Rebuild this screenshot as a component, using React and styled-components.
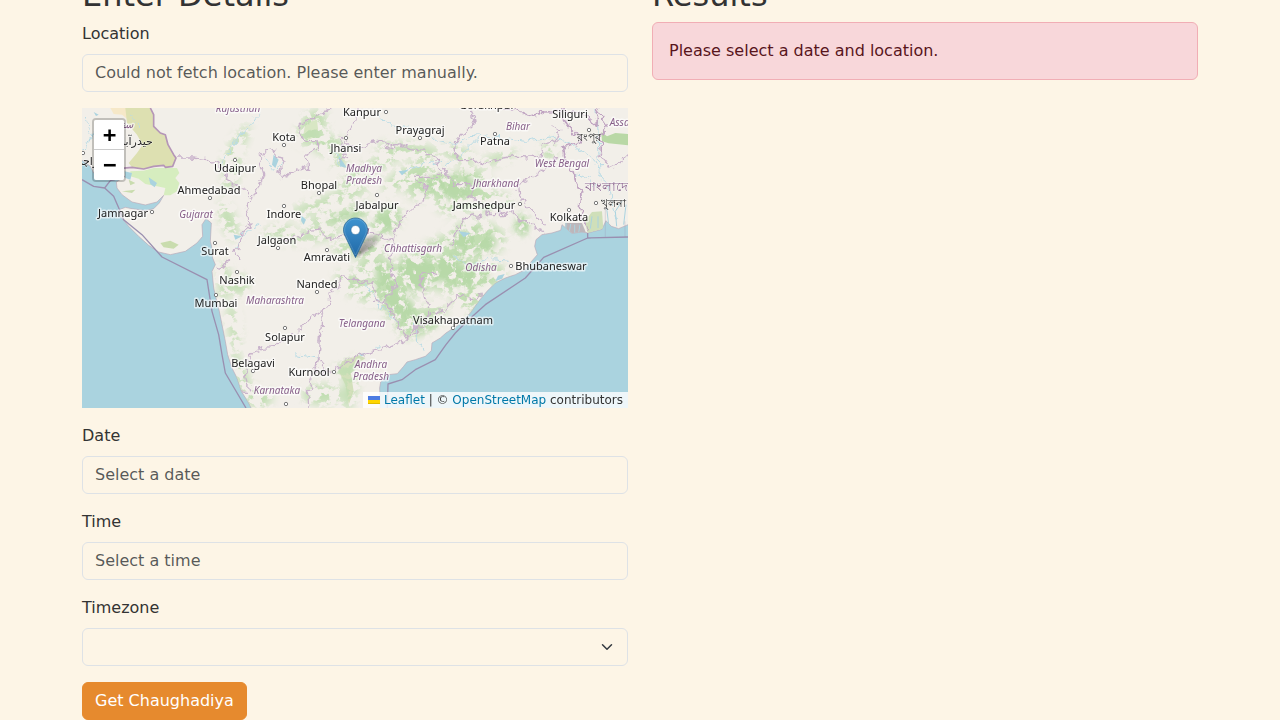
import React from "react";
import styled, { createGlobalStyle, css } from "styled-components";

const GlobalStyle = createGlobalStyle`
  *, *::before, *::after { box-sizing: border-box; }
  body {
    margin: 0;
    background: #fdf5e6;
    color: #333;
    font: 16px/24px "DejaVu Sans", sans-serif;
  }
`;

const Container = styled.main`
  display: grid;
  grid-template-columns: repeat(2, minmax(0, 1fr));
  gap: 24px;
  max-width: 1140px;
  margin: -24px auto 0;
  padding: 0 12px;
`;

const Column = styled.section``;

const Title = styled.h2`
  margin: 0 0 8px;
  font-size: 32px;
  line-height: 38px;
  font-weight: 500;
`;

const Field = styled.div`
  margin-bottom: 16px;
`;

const Label = styled.label`
  display: block;
  margin-bottom: 8px;
`;

const control = css`
  display: block;
  width: 100%;
  height: 38px;
  padding: 5px 12px 7px;
  border: 1px solid #dee2e6;
  border-radius: 6px;
  background: transparent;
  color: #212529;
  font: inherit;
`;

const Input = styled.input`
  ${control}
  &::placeholder { color: rgba(33, 37, 41, 0.75); opacity: 1; }
`;

const SelectWrap = styled.div`
  display: grid;
  align-items: center;
  & > * { grid-area: 1 / 1; }
`;

const Select = styled.select`
  ${control}
  appearance: none;
`;

const Chevron = styled.svg`
  justify-self: end;
  width: 16px;
  height: 12px;
  margin-right: 13px;
  pointer-events: none;
`;

const Button = styled.button`
  display: block;
  padding: 6px 12px;
  border: 1px solid #e68a2e;
  border-radius: 6px;
  background: #e68a2e;
  color: #fff;
  font: inherit;
`;

const Alert = styled.div`
  padding: 16px;
  border: 1px solid #f1aeb5;
  border-radius: 6px;
  background: #f8d7da;
  color: #58151c;
`;

const Map = styled.div`
  position: relative;
  height: 300px;
  margin-bottom: 16px;
  overflow: hidden;
  background: #aad3df;
`;

const MapDrawing = styled.svg`
  display: block;
  width: 100%;
  height: 100%;
`;

const ZoomControl = styled.div`
  position: absolute;
  top: 10px;
  left: 10px;
  border: 2px solid rgba(0, 0, 0, 0.2);
  border-radius: 4px;
  background-clip: padding-box;
`;

const ZoomButton = styled.button`
  display: block;
  width: 30px;
  height: 30px;
  padding: 0;
  border: 0;
  border-bottom: ${(p) => (p.$first ? "1px solid #ccc" : "0")};
  border-radius: ${(p) => (p.$first ? "2px 2px 0 0" : "0 0 2px 2px")};
  background: #fff;
  color: #000;
  font: bold 22px/30px "DejaVu Sans Mono", monospace;
  text-indent: 1px;
`;

const Marker = styled.svg`
  position: absolute;
  left: 50%;
  top: 50%;
  width: 41px;
  height: 41px;
  margin: -41px 0 0 -12px;
`;

const Attribution = styled.div`
  position: absolute;
  right: 0;
  bottom: 0;
  padding: 0 5px;
  background: rgba(255, 255, 255, 0.8);
  color: #333;
  font-size: 12px;
  line-height: 16px;
  white-space: nowrap;
`;

const MapLink = styled.a`
  color: #0078a8;
  text-decoration: none;
`;

const Flag = styled.svg`
  width: 12px;
  height: 8px;
  margin-right: 4px;
`;

const City = styled.text`
  font: 11px "Noto Sans", "DejaVu Sans", sans-serif;
  fill: #222;
  stroke: #fff;
  stroke-opacity: 0.6;
  stroke-width: ${(p) => (p.$native ? 1 : 3)}px;
  stroke-linejoin: round;
  paint-order: stroke;
  text-anchor: middle;
`;

const Region = styled(City)`
  font-size: ${(p) => (p.$native ? 13 : 10)}px;
  font-style: ${(p) => (p.$native ? "normal" : "italic")};
  fill: #87608a;
`;

const cities = [
  ["Kanpur", 280, 8], ["Kota", 202, 33], ["Prayagraj", 338, 26], ["Jhansi", 264, 44],
  ["Udaipur", 153, 64], ["Bhopal", 237, 81], ["Ahmedabad", 127, 86], ["Jabalpur", 295, 101],
  ["Indore", 202, 110], ["Jamnagar", 41, 109], ["Jalgaon", 195, 136], ["Amravati", 245, 153],
  ["Surat", 133, 147], ["Nashik", 155, 176], ["Nanded", 235, 180], ["Mumbai", 134, 199],
  ["Solapur", 203, 233], ["Belagavi", 171, 259], ["Kurnool", 227, 268], ["Visakhapatnam", 371, 216],
  ["Bhubaneswar", 469, 162], ["Kolkata", 487, 113], ["Jamshedpur", 402, 101], ["Patna", 413, 37],
  ["Siliguri", 488, 10], ["Gorakhpur", 405, 1],
];

const nativeCities = [
  ["রংপুর", 507, 33], ["খুলনা", 531, 99], ["حيدرآباد", 53, 37], ["کراچی", 7, 57],
];

const regions = [
  ["Rajasthan", 156, 4], ["Gujarat", 114, 110], ["Madhya", 282, 64], ["Pradesh", 282, 76],
  ["India", 276, 126], ["Chhattisgarh", 331, 144], ["Odisha", 399, 163], ["Maharashtra", 193, 196],
  ["Telangana", 280, 219], ["Andhra", 289, 260], ["Pradesh", 289, 272], ["Karnataka", 195, 286],
  ["Bihar", 436, 22], ["Jharkhand", 414, 79], ["West Bengal", 480, 59], ["Assam", 542, 18],
  ["سنڌ", 43, 20],
];

const dots = [
  [304, 4], [202, 37], [338, 30], [264, 30], [153, 52], [237, 85], [128, 90], [295, 87],
  [202, 98], [70, 104], [196, 140], [245, 142], [133, 135], [155, 164], [235, 184], [134, 187],
  [203, 220], [171, 263], [252, 264], [371, 220], [429, 158], [487, 102], [438, 96], [413, 26],
  [507, 22], [514, 95], [1, 45], [204, 296],
];

const LAND =
  "M-9 -9H1650V345L1610 362 1588 355 1572 338 1560 364 1517 375 1500 372 1470 376 1440 350 1436 367 1410 375 1380 380 1362 395 1358 415 1366 440 1340 470 1330 485 1300 500 1270 510 1240 525 1215 550 1190 580 1165 615 1130 650 1092 675 1075 690 1050 705 1048 728 1030 745 1000 755 975 762 965 775 946 797 920 800 896 822 893 840 895 910H512L500 885 478 850 465 810 450 780 437 740 430 700 420 650 412 610 402 570 395 540 390 490 400 470 392 450 390 420 385 400 388 345 372 332 360 350 362 385 345 405 310 430 265 440 230 432 200 412 170 385 140 355 115 325 112 305 130 298 150 302 190 308 215 302 232 285 245 262 225 282 190 291 150 282 120 260 105 240 103 222 130 205 100 205 80 215 35 195 25 175 -9 150Z";

const BORDERS = [
  "M282 150 330 150 375 155 400 165 425 185 440 215 460 235 490 250 508 275 490 310 495 335 510 350 480 375 470 400 460 440 475 450",
  "M546 130 575 125 580 145 608 150 600 170 590 200 600 212 650 180 680 185 675 140 710 120 708 98 670 98 650 75 655 50 700 25 750 0",
  "M546 130 530 150 545 200 530 240 508 275",
  "M828 0 825 30 806 60 790 85 775 95 780 105 790 140 775 150 795 155M790 100 826 125 870 105 906 95 920 120 946 112 986 125 1026 130 1066 160 1081 205 1001 205 1010 225 1036 240 1026 280 976 310 946 350 931 400",
  "M586 395 636 390 686 370 721 365 726 390 776 385 866 375 901 380 931 400 926 450",
  "M926 450 931 500 946 530 911 570 911 590 956 650 950 660 981 690 1040 640 1040 600 1030 570 1020 530 1016 490 1070 500",
  "M776 505 806 510 846 525 871 525 881 580 911 590M776 505 771 535 741 555 746 580 721 610 716 680 711 750 686 820 696 840 676 850 681 900",
  "M721 605 686 630 646 675 610 690 580 715 546 718 500 740 490 800 500 850",
  "M706 750 731 765 721 800 751 785 776 775 836 740 886 725 926 715 981 690",
  "M981 680 1010 650 1050 620 1092 600 1130 560 1170 575 1210 555",
  "M1162 0 1182 40 1122 95 1117 130 1132 155 1167 155 1202 170 1262 150 1307 145 1377 150 1382 110 1422 100 1437 70 1412 50",
  "M1081 180 1120 230 1167 230 1167 270 1202 285 1222 320 1262 320 1292 310 1322 340 1392 372M1110 410 1120 370 1150 330 1202 320",
  "M1422 150 1412 170 1352 210 1307 230 1310 260 1332 290 1392 350",
  "M1558 140 1582 180 1612 170 1638 140M404 475 425 480 440 455M470 850 495 855",
];

const HEAVY = [
  "M205 0 215 20 215 55 235 75 250 80 258 110 275 140 282 150 272 175 250 178 245 172 215 175 185 183 150 178 110 182",
];

const BANGLADESH = [
  "M1242 0 1300 5 1340 25 1390 12 1437 10 1445 35 1472 70 1492 90 1500 105 1442 120 1447 155 1477 190 1482 230 1497 260 1492 300 1507 340 1517 375",
  "M1440 0 1450 10 1500 15 1545 50 1550 0 1562 30 1572 60 1557 80 1558 140",
];

// Forested areas: cx, cy, rx, ry, rotation
const WOODS = [
  [1000, 500, 62, 60, 0], [930, 560, 44, 100, -20], [975, 630, 35, 55, 0], [1100, 490, 70, 60, -30],
  [1020, 640, 80, 35, -30], [1160, 560, 50, 50, -20], [1210, 500, 60, 45, 0], [1180, 395, 90, 55, 0],
  [1320, 350, 22, 32, 0], [1140, 250, 90, 60, -30], [1200, 280, 90, 30, 0], [1040, 230, 70, 40, -20],
  [980, 200, 90, 25, -30], [880, 170, 100, 18, -25], [830, 210, 70, 18, -25], [740, 280, 130, 18, -18],
  [770, 325, 110, 20, -15], [910, 340, 55, 38, -40], [690, 385, 100, 16, -8], [840, 420, 90, 24, 0],
  [880, 480, 60, 34, 0], [690, 60, 38, 60, 30], [730, 110, 40, 30, 0], [830, 540, 80, 30, 30],
  [980, 125, 100, 18, 5], [1060, 420, 70, 24, -30], [1130, 140, 50, 22, 20], [1250, 150, 60, 14, -20],
  [455, 660, 16, 80, -6], [480, 810, 18, 80, -20], [425, 520, 16, 60, 0], [470, 530, 30, 30, 0],
  [790, 780, 50, 18, -30], [805, 840, 20, 70, 10], [450, 200, 20, 60, 20], [440, 340, 22, 60, -20],
  [530, 870, 40, 30, 0], [460, 120, 18, 80, 30], [590, 370, 50, 16, -10], [720, 860, 60, 30, 0],
  [1400, 130, 20, 30, 0], [770, 140, 22, 50, 0],
];

// The densest cover, drawn a second time with a lower threshold
const DENSE = [
  [1000, 490, 55, 60, 0], [925, 550, 34, 90, -20], [975, 620, 26, 50, 0], [1090, 480, 50, 40, -30],
  [1320, 350, 20, 30, 0], [1175, 400, 70, 36, 0], [1130, 240, 50, 40, -30], [1060, 225, 50, 24, -10],
  [915, 335, 40, 30, -40], [1160, 500, 60, 34, -10], [1030, 650, 50, 18, -20], [800, 325, 60, 12, -15],
];

const RIVERS = [
  "M876 20 930 50 1000 65 1060 95 1120 110 1180 80 1260 90 1330 100 1420 85 1470 110 1540 160 1555 210",
  "M1545 0 1550 120 1555 210 1580 240 1600 330", "M1092 170 1140 140 1190 90", "M966 190 1020 170 1081 160",
  "M420 170 460 100 530 20", "M600 160 580 190 546 145", "M850 530 900 600 960 650", "M1000 650 1010 700 1030 730",
  "M1110 440 1160 470 1230 455 1280 460", "M150 20 170 60", "M460 420 480 380 540 350", "M1478 200 1520 210 1550 240",
  "M880 720 900 710", "M710 750 640 740", "M760 120 770 150 775 180", "M0 130 30 80 10 30",
];

const LAKES = [
  "M35 12 50 20 42 24Z", "M575 140 590 155 580 180 570 170Z", "M655 320 672 335 665 350 658 340Z",
  "M770 145 785 165 795 180 775 175Z", "M1130 370 1165 375 1145 388Z", "M1240 520 1248 503 1268 498 1260 512Z",
  "M128 190 150 195 145 215 130 210Z", "M200 208 225 225 218 238 205 228Z", "M950 190 980 185 960 202Z",
  "M455 380 480 385 460 395Z", "M830 740 850 735 840 745Z",
];

const ellipses = (areas) =>
  areas.map(([x, y, rx, ry, r], i) => (
    <ellipse key={i} cx={x} cy={y} rx={rx} ry={ry} transform={`rotate(${r} ${x} ${y})`} />
  ));

function IndiaMap() {
  return (
    <MapDrawing viewBox="0 0 546 300" preserveAspectRatio="xMidYMid slice" role="img" aria-label="Map of India">
      <defs>
        <filter id="rugged" x="0" y="0" width="1638" height="900" filterUnits="userSpaceOnUse">
          <feTurbulence type="fractalNoise" baseFrequency="0.05" numOctaves="2" seed="4" result="noise" />
          <feDisplacementMap in="SourceGraphic" in2="noise" scale="30" xChannelSelector="R" yChannelSelector="G" />
        </filter>
        <filter id="forest" x="0" y="0" width="1638" height="900" filterUnits="userSpaceOnUse" colorInterpolationFilters="sRGB">
          <feGaussianBlur in="SourceGraphic" stdDeviation="12" result="area" />
          <feTurbulence type="fractalNoise" baseFrequency="0.035 0.045" numOctaves="4" seed="9" />
          <feColorMatrix values="0 0 0 0 0.76  0 0 0 0 0.87  0 0 0 0 0.7  10 0 0 0 -4.7" />
          <feComposite in2="area" operator="in" />
        </filter>
        <filter id="dense" x="0" y="0" width="1638" height="900" filterUnits="userSpaceOnUse" colorInterpolationFilters="sRGB">
          <feGaussianBlur in="SourceGraphic" stdDeviation="9" result="area" />
          <feTurbulence type="fractalNoise" baseFrequency="0.04 0.03" numOctaves="4" seed="21" />
          <feColorMatrix values="0 0 0 0 0.72  0 0 0 0 0.85  0 0 0 0 0.66  10 0 0 0 -4.1" />
          <feComposite in2="area" operator="in" />
        </filter>
        <clipPath id="land"><path d={LAND} /></clipPath>
      </defs>
      <g transform="scale(.33333)" fill="none" strokeLinejoin="round">
        <path d={LAND} fill="#f2efe9" stroke="#b9a9b8" strokeWidth="2" />
        <g clipPath="url(#land)">
          <path d="M85 0H135L165 60 150 45 120 20 95 18Z" fill="#f6e8c8" />
          <path d="M130 0H205L215 20V55L235 75 250 80 258 110 275 140 282 150 272 175 250 178 245 172 215 175 185 183 150 178 140 165 165 135 182 110 165 80 135 45Z" fill="#dde0b1" />
          <path d="M145 190 185 188 215 180 285 180 292 195 280 210 292 225 285 250 265 262 245 262 250 240 225 235 190 228 170 212 145 205Z" fill="#d6edbf" />
          <path d="M1558 72 1575 85 1600 75 1638 78V112L1580 106 1560 100Z" fill="#b9d8a6" />
          <path d="M1508 340 1530 312 1560 310 1564 362 1517 375Z" fill="#cfdfb9" />
          <path d="M1450 345 1500 345 1512 374 1450 376Z" fill="#bdb7bb" />
          <path d="M235 405 265 398 290 410 275 422 245 418ZM120 250 160 245 150 255ZM140 215 160 225 145 232Z" fill="#c9dcae" />
          <path d="M780 760 830 742 850 750 805 785 815 850 800 890 790 830 770 790Z" fill="#d3e0bb" />
          <path d="M670 45 705 35 710 80 680 95 665 75Z" fill="#d8e7c4" />
          <g fill="#000" filter="url(#forest)">{ellipses(WOODS)}</g>
          <g fill="#000" filter="url(#dense)">{ellipses(DENSE)}</g>
          <g stroke="#b9dbe5" strokeWidth="3" filter="url(#rugged)">
            {RIVERS.map((d) => <path key={d} d={d} />)}
          </g>
          <path d={LAKES.join("")} fill="#aad3df" />
          <path d="M1452 372V345M1462 372 1466 348M1478 374V350M1490 374 1494 350M1525 362 1530 325M1548 360V325M1580 350 1574 300M1604 355 1600 310 1620 280M1625 350 1632 290" stroke="#aad3df" strokeWidth="3" />
          <g stroke="#c9b3cb" strokeWidth="4" filter="url(#rugged)">
            {BORDERS.map((d) => <path key={d} d={d} />)}
          </g>
          <g stroke="#b596b7" strokeWidth="5">
            {HEAVY.map((d) => <path key={d} d={d} />)}
          </g>
          <g stroke="#bfa3c1" strokeWidth="5" filter="url(#rugged)">
            {BANGLADESH.map((d) => <path key={d} d={d} />)}
          </g>
        </g>
        <g stroke="#9a8fb0" strokeWidth="4">
          <path d="M0 215 35 235 68 240 95 265 108 295 125 335 180 380 240 447 375 515 390 610 410 680 420 740 430 795 492 900M68 240 85 218 100 215" />
          <path d="M916 900 918 828 960 815 1000 785 1060 755 1092 710 1120 675 1155 640 1210 590 1330 510 1385 448 1517 390 1638 387M1517 375V390" />
          <path d="M1570 300V387M1629 340V387" strokeWidth="2" opacity=".4" />
        </g>
      </g>
      <g fill="#fff" stroke="#777" strokeWidth="1">
        {dots.map(([x, y]) => <circle key={`${x}-${y}`} cx={x} cy={y} r="1.7" />)}
      </g>
      {regions.map(([name, x, y]) => <Region key={name + y} x={x} y={y}>{name}</Region>)}
      <Region $native x="528" y="83">বাংলাদেশ</Region>
      {cities.map(([name, x, y]) => <City key={name} x={x} y={y}>{name}</City>)}
      {nativeCities.map(([name, x, y]) => <City $native key={name} x={x} y={y}>{name}</City>)}
    </MapDrawing>
  );
}

function Pin() {
  return (
    <Marker viewBox="0 0 41 41" aria-hidden="true">
      <defs>
        <linearGradient id="pin" x1="0" y1="0" x2="0" y2="1">
          <stop offset="0" stopColor="#3f94d0" />
          <stop offset="1" stopColor="#2068a6" />
        </linearGradient>
        <linearGradient id="shade" x1="0" y1="1" x2="1" y2="0">
          <stop offset="0" stopOpacity=".5" />
          <stop offset="1" stopOpacity=".1" />
        </linearGradient>
        <filter id="soft" x="-30%" y="-30%" width="160%" height="160%">
          <feGaussianBlur stdDeviation="1.4" />
        </filter>
      </defs>
      <path d="M13 40C15 33 19 24 26 19 32 16 37 19 35 24 32 30 22 35 13 40Z" fill="url(#shade)" filter="url(#soft)" />
      <path d="M12.500 1C6 1 .5 6.300.5 12.800c0 3 .9 5 2.200 7.500L12.500 40.500 22.300 20.300c1.300-2.500 2.200-4.500 2.200-7.500C24.500 6.300 19 1 12.500 1Z" fill="url(#pin)" stroke="#2e6c97" strokeOpacity=".8" />
      <path d="M12.500 2C6.500 2 1.600 6.900 1.600 12.800c0 2.800.8 4.600 2.100 7L12.500 38l8.800-18.200c1.300-2.400 2.100-4.200 2.100-7C23.400 6.900 18.500 2 12.500 2Z" fill="none" stroke="#fff" strokeOpacity=".15" />
      <circle cx="12.500" cy="13" r="4.500" fill="#fff" stroke="#2e6c97" strokeOpacity=".5" />
    </Marker>
  );
}

export default function App() {
  return (
    <>
      <GlobalStyle />
      <Container>
        <Column>
          <Title>Enter Details</Title>
          <Field>
            <Label htmlFor="location">Location</Label>
            <Input id="location" placeholder="Could not fetch location. Please enter manually." />
          </Field>
          <Map>
            <IndiaMap />
            <Pin />
            <ZoomControl>
              <ZoomButton $first type="button" title="Zoom in">+</ZoomButton>
              <ZoomButton type="button" title="Zoom out">−</ZoomButton>
            </ZoomControl>
            <Attribution>
              <MapLink href="#leaflet">
                <Flag viewBox="0 0 12 8" aria-hidden="true">
                  <path fill="#4c7be1" d="M0 0h12v4H0z" />
                  <path fill="#ffd500" d="M0 4h12v3H0z" />
                  <path fill="#e0bc00" d="M0 7h12v1H0z" />
                </Flag>
                Leaflet
              </MapLink>
              {" | © "}
              <MapLink href="#openstreetmap">OpenStreetMap</MapLink>
              {" contributors"}
            </Attribution>
          </Map>
          <Field>
            <Label htmlFor="date">Date</Label>
            <Input id="date" placeholder="Select a date" />
          </Field>
          <Field>
            <Label htmlFor="time">Time</Label>
            <Input id="time" placeholder="Select a time" />
          </Field>
          <Field>
            <Label htmlFor="timezone">Timezone</Label>
            <SelectWrap>
              <Select id="timezone" defaultValue="">
                <option value="" />
              </Select>
              <Chevron viewBox="0 0 16 16" aria-hidden="true">
                <path d="m2 5 6 6 6-6" fill="none" stroke="#343a40" strokeWidth="2" strokeLinecap="round" strokeLinejoin="round" />
              </Chevron>
            </SelectWrap>
          </Field>
          <Button type="button">Get Chaughadiya</Button>
        </Column>
        <Column>
          <Title>Results</Title>
          <Alert role="alert">Please select a date and location.</Alert>
        </Column>
      </Container>
    </>
  );
}
